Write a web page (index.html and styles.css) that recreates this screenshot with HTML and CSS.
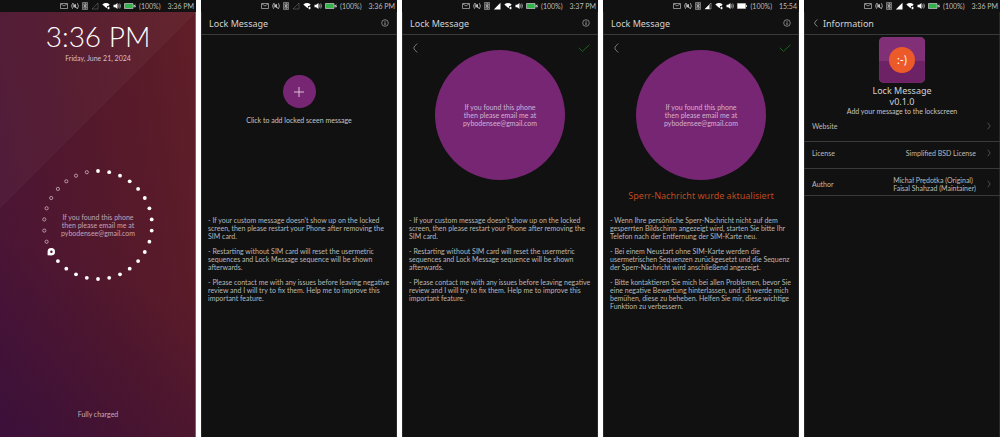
FILE: index.html
```
<!DOCTYPE html>
<html lang="en">
<head>
<meta charset="utf-8">
<title>Lock Message</title>
<link rel="stylesheet" href="styles.css">
</head>
<body>
<svg class="defs" aria-hidden="true">
  <symbol id="mail" viewBox="0 0 8 8"><path d="M.5 1.5h7v5h-7zM1 2l3 2 3-2" fill="none" stroke="currentColor" stroke-width=".7"/></symbol>
  <symbol id="vibrate" viewBox="0 0 8 8"><path d="M1.600 1.200Q-.400 4 1.600 6.800M6.400 1.200q2 2.800 0 5.600M2.600 2.500Q1.900 4 2.600 5.500M1.800 1l4.600 6" fill="none" stroke="currentColor" stroke-width=".8"/><path d="M3 3l2-1v4L3 5z" fill="currentColor"/></symbol>
  <symbol id="bluetooth" viewBox="0 0 6 8"><path d="M.500.500h5v7h-5z" fill="#444" stroke="currentColor" stroke-width=".5"/><path d="M1.500 2.600l3 2.700L3 6.600V1.400l1.500 1.300-3 2.700" fill="none" stroke="currentColor" stroke-width=".7"/></symbol>
  <symbol id="signal-off" viewBox="0 0 8 8"><path d="M7 1v6H1z" fill="none" stroke="currentColor" stroke-width=".5" opacity=".6"/></symbol>
  <symbol id="signal" viewBox="0 0 8 8"><path d="M7.500.800v6.700H.800z" fill="#fff"/></symbol>
  <symbol id="signal-mid" viewBox="0 0 8 8"><path d="M7 1v6H1z" fill="none" stroke="currentColor" stroke-width=".6"/><path d="M5.500 2.500V7H1z" fill="#fff"/></symbol>
  <symbol id="wifi" viewBox="0 0 8 8"><path d="M.300 2.500Q4-.300 7.700 2.500L6.300 4H5v1.500L4.300 6z" fill="#fff"/><path d="M5.600 4.800h1.800v2.400H5.600z" fill="#fff"/></symbol>
  <symbol id="sound" viewBox="0 0 8 8"><path d="M.500 2.700h1.700L4.500 1v6L2.200 5.300H.500z" fill="#fff"/><path d="M5.500 2.500q.900 1.500 0 3M6.700 1.500q1.500 2.500 0 5" fill="none" stroke="currentColor" stroke-width=".8"/></symbol>
  <symbol id="charging" viewBox="0 0 12 8"><path d="M.500 1.500h8.500v5H.500z" fill="#32b44a" stroke="#bbb" stroke-width=".8"/><path d="M9.500 3h1v2h-1z" fill="#ccc"/><path d="M11.500 1.500L10 4.300h1L10.600 6.500 12 3.700h-1z" fill="#fff"/></symbol>
  <symbol id="battery" viewBox="0 0 10 8"><path d="M.500 1.500h8v5h-8z" fill="#fff" stroke="#bbb" stroke-width=".8"/><path d="M9 3h1v2H9z" fill="#ccc"/></symbol>
  <symbol id="info" viewBox="0 0 8 8"><circle cx="4" cy="4" r="3.300" fill="none" stroke="currentColor" stroke-width=".6"/><path d="M4 1.900v.8M4 3.400v2.700" stroke="currentColor" stroke-width=".8"/></symbol>
  <symbol id="back" viewBox="0 0 5 10"><path d="M4.200.500L1 4v2l3.200 3.500" fill="none" stroke="currentColor" stroke-width=".8"/></symbol>
  <symbol id="next" viewBox="0 0 4 8"><path d="M.700.700L3.200 4 .700 7.300" fill="none" stroke="currentColor" stroke-width=".6"/></symbol>
  <symbol id="check" viewBox="0 0 12 8"><path d="M.700 3.800l3.800 3.500L11.500.700" fill="none" stroke="currentColor" stroke-width=".9"/></symbol>
</svg>

<main class="screens">
  <section class="screen lock">
    <div class="status">
      <svg class="ic"><use href="#mail"/></svg><svg class="ic"><use href="#vibrate"/></svg><svg class="ic slim"><use href="#bluetooth"/></svg><svg class="ic"><use href="#signal-off"/></svg><svg class="ic"><use href="#wifi"/></svg><svg class="ic"><use href="#sound"/></svg><svg class="ic wide"><use href="#charging"/></svg>
      <span>(100%)</span><time class="clock">3:36 PM</time>
    </div>
    <time class="lock-time">3:36 PM</time>
    <p class="lock-date">Friday, June 21, 2024</p>
    <div class="ring">
      <svg class="dots" viewBox="0 0 120 120" aria-hidden="true">
        <g fill="#fff">
          <circle cx="60" cy="6" r="1.900"/><circle cx="71.200" cy="7.200" r="1.900"/><circle cx="82" cy="10.700" r="1.900"/><circle cx="91.700" cy="16.300" r="1.900"/><circle cx="100.100" cy="23.900" r="1.900"/>
          <circle cx="106.800" cy="33" r="1.900"/><circle cx="111.400" cy="43.300" r="1.900"/><circle cx="113.700" cy="54.400" r="1.900"/><circle cx="113.700" cy="65.600" r="1.900"/><circle cx="111.400" cy="76.700" r="1.900"/>
          <circle cx="106.800" cy="87" r="1.900"/><circle cx="100.100" cy="96.100" r="1.900"/><circle cx="91.700" cy="103.700" r="1.900"/><circle cx="82" cy="109.300" r="1.900"/><circle cx="71.200" cy="112.800" r="1.900"/>
          <circle cx="60" cy="114" r="1.900"/><circle cx="48.800" cy="112.800" r="1.900"/><circle cx="38" cy="109.300" r="1.900"/><circle cx="28.300" cy="103.700" r="1.900"/><circle cx="19.900" cy="96.100" r="1.900"/>
          <path d="M9.600 90.300V86.800A3.700 3.700 0 1 1 13.300 90.400z"/>
        </g>
        <circle cx="13.400" cy="86.800" r="1.200" fill="#4d1631"/>
        <g fill="none" stroke="#cdb3bd" stroke-width=".8">
          <circle cx="8.600" cy="76.700" r="1.600"/><circle cx="6.300" cy="65.600" r="1.600"/><circle cx="6.300" cy="54.400" r="1.600"/><circle cx="8.600" cy="43.300" r="1.600"/><circle cx="13.200" cy="33" r="1.600"/>
          <circle cx="19.900" cy="23.900" r="1.600"/><circle cx="28.300" cy="16.300" r="1.600"/><circle cx="38" cy="10.700" r="1.600"/><circle cx="48.800" cy="7.200" r="1.600"/>
        </g>
      </svg>
      <p class="ring-text">If you found this phone<br>then please email me at<br>pybodensee@gmail.com</p>
    </div>
    <p class="charge">Fully charged</p>
  </section>

  <section class="screen">
    <div class="status">
      <svg class="ic"><use href="#mail"/></svg><svg class="ic"><use href="#vibrate"/></svg><svg class="ic slim"><use href="#bluetooth"/></svg><svg class="ic"><use href="#signal-off"/></svg><svg class="ic"><use href="#wifi"/></svg><svg class="ic"><use href="#sound"/></svg><svg class="ic wide"><use href="#charging"/></svg>
      <span>(100%)</span><time class="clock">3:36 PM</time>
    </div>
    <header class="bar"><h1 class="title">Lock Message</h1><button class="icon-btn" aria-label="Information"><svg class="ic"><use href="#info"/></svg></button></header>
    <div class="stage add">
      <button class="add-btn" aria-labelledby="add-label"><svg class="plus" viewBox="0 0 10 10"><path d="M5 0v10M0 5h10" stroke="#e3cfe2" stroke-width=".9"/></svg></button>
      <p id="add-label">Click to add locked sceen message</p>
    </div>
    <div class="notes">
      <p>- If your custom message doesn't show up on the locked<br>screen, then please restart your Phone after removing the<br>SIM card.</p>
      <p>- Restarting without SIM card will reset the usermetric<br>sequences and Lock Message sequence will be shown<br>afterwards.</p>
      <p>- Please contact me with any issues before leaving negative<br>review and I will try to fix them. Help me to improve this<br>important feature.</p>
    </div>
  </section>

  <section class="screen">
    <div class="status">
      <svg class="ic"><use href="#mail"/></svg><svg class="ic"><use href="#vibrate"/></svg><svg class="ic slim"><use href="#bluetooth"/></svg><svg class="ic"><use href="#signal"/></svg><svg class="ic"><use href="#wifi"/></svg><svg class="ic"><use href="#sound"/></svg><svg class="ic wide"><use href="#charging"/></svg>
      <span>(100%)</span><time class="clock">3:37 PM</time>
    </div>
    <header class="bar"><h1 class="title">Lock Message</h1><button class="icon-btn" aria-label="Information"><svg class="ic"><use href="#info"/></svg></button></header>
    <div class="stage edit">
      <button class="icon-btn tool" aria-label="Back"><svg class="chev"><use href="#back"/></svg></button>
      <div class="disc"><textarea class="message" rows="3" aria-label="Lock message">If you found this phone
then please email me at
pybodensee@gmail.com</textarea></div>
      <button class="icon-btn tool save" aria-label="Save"><svg class="ic wide"><use href="#check"/></svg></button>
    </div>
    <div class="notes">
      <p>- If your custom message doesn't show up on the locked<br>screen, then please restart your Phone after removing the<br>SIM card.</p>
      <p>- Restarting without SIM card will reset the usermetric<br>sequences and Lock Message sequence will be shown<br>afterwards.</p>
      <p>- Please contact me with any issues before leaving negative<br>review and I will try to fix them. Help me to improve this<br>important feature.</p>
    </div>
  </section>

  <section class="screen" lang="de">
    <div class="status">
      <svg class="ic"><use href="#mail"/></svg><svg class="ic"><use href="#vibrate"/></svg><svg class="ic slim"><use href="#bluetooth"/></svg><svg class="ic"><use href="#signal-mid"/></svg><svg class="ic"><use href="#wifi"/></svg><svg class="ic"><use href="#sound"/></svg><svg class="ic cell"><use href="#battery"/></svg>
      <span>(100%)</span><time class="clock">15:54</time>
    </div>
    <header class="bar"><h1 class="title">Lock Message</h1><button class="icon-btn" aria-label="Information"><svg class="ic"><use href="#info"/></svg></button></header>
    <div class="stage edit">
      <button class="icon-btn tool" aria-label="Zurück"><svg class="chev"><use href="#back"/></svg></button>
      <div class="disc"><textarea class="message" rows="3" aria-label="Sperr-Nachricht">If you found this phone
then please email me at
pybodensee@gmail.com</textarea></div>
      <button class="icon-btn tool save" aria-label="Speichern"><svg class="ic wide"><use href="#check"/></svg></button>
      <p class="updated" role="status">Sperr-Nachricht wurde aktualisiert</p>
    </div>
    <div class="notes">
      <p>- Wenn Ihre persönliche Sperr-Nachricht nicht auf dem<br>gesperrten Bildschirm angezeigt wird, starten Sie bitte Ihr<br>Telefon nach der Entfernung der SIM-Karte neu.</p>
      <p>- Bei einem Neustart ohne SIM-Karte werden die<br>usermetrischen Sequenzen zurückgesetzt und die Sequenz<br>der Sperr-Nachricht wird anschließend angezeigt.</p>
      <p>- Bitte kontaktieren Sie mich bei allen Problemen, bevor Sie<br>eine negative Bewertung hinterlassen, und ich werde mich<br>bemühen, diese zu beheben. Helfen Sie mir, diese wichtige<br>Funktion zu verbessern.</p>
    </div>
  </section>

  <section class="screen">
    <div class="status">
      <svg class="ic"><use href="#mail"/></svg><svg class="ic"><use href="#vibrate"/></svg><svg class="ic slim"><use href="#bluetooth"/></svg><svg class="ic"><use href="#signal"/></svg><svg class="ic"><use href="#wifi"/></svg><svg class="ic"><use href="#sound"/></svg><svg class="ic wide"><use href="#charging"/></svg>
      <span>(100%)</span><time class="clock">3:36 PM</time>
    </div>
    <header class="bar info-bar"><button class="icon-btn" aria-label="Back"><svg class="arrow"><use href="#back"/></svg></button><h1 class="title">Information</h1></header>
    <div class="about">
      <div class="logo"><span class="face">:-)</span></div>
      <h2 class="app">Lock Message<br>v0.1.0</h2>
      <p>Add your message to the lockscreen</p>
    </div>
    <a class="row" href="#website"><span class="key">Website</span><svg class="arrow"><use href="#next"/></svg></a>
    <a class="row" href="#license"><span class="key">License</span><span>Simplified BSD License</span><svg class="arrow"><use href="#next"/></svg></a>
    <a class="row author" href="#author"><span class="key">Author</span><span>Michał Prędotka (Original)<br>Faisal Shahzad (Maintainer)</span><svg class="arrow"><use href="#next"/></svg></a>
  </section>
</main>
</body>
</html>
```
FILE: styles.css
```
* { box-sizing: border-box; }

body {
  margin: 0;
  background: #fff;
  color: #c4c4c4;
  font: 7px/8px Lato, "Noto Sans", sans-serif;
}

p, h1, h2 { margin: 0; font-weight: 400; }

button {
  padding: 0;
  border: 0;
  background: none;
  color: inherit;
  font: inherit;
  cursor: pointer;
}

svg { display: block; }
.defs { position: absolute; width: 0; height: 0; }

.screens {
  display: grid;
  grid-template-columns: repeat(5, 1fr);
  gap: 5px;
  min-height: 100vh;
}

.screen {
  display: flex;
  flex-direction: column;
  min-width: 0;
  background: #111;
  box-shadow: inset 1px 0 #292929, inset -1px 0 #292929;
}

.status {
  display: flex;
  align-items: center;
  justify-content: flex-end;
  gap: 3px;
  height: 12px;
  padding-right: 2px;
  background: #111;
  color: #bcbcbc;
}
.clock { padding-left: 4px; }

.ic { width: 8px; height: 8px; }
.slim { width: 6px; }
.wide { width: 12px; }
.cell { width: 10px; }
.chev { width: 5px; height: 10px; }
.arrow { width: 4px; height: 8px; }

/* Lock screen */
.lock {
  align-items: center;
  background:
    linear-gradient(135deg, rgba(255, 255, 255, .03) 33%, transparent 33%),
    linear-gradient(200deg, transparent 60%, rgba(35, 8, 62, .35)),
    linear-gradient(80deg, #481438, #53182c 50%, #601e27);
  box-shadow: inset -1px 0 #905a66;
  text-align: center;
}
.lock .status { align-self: stretch; }
.lock-time {
  padding-top: 8px;
  color: #fff;
  font-size: 28px;
  font-weight: 300;
  line-height: 32px;
}
.lock-date { padding-top: 2px; color: #d5bfc6; }
.ring { display: grid; place-items: center; margin-top: 103px; color: #c4a5b1; }
.dots, .ring-text { grid-area: 1 / 1; }
.dots { width: 120px; height: 120px; }
.charge { margin-top: auto; padding-bottom: 19px; color: #c3acba; }

/* App header */
.bar {
  display: flex;
  align-items: center;
  justify-content: space-between;
  height: 23px;
  padding: 0 8px;
  border-bottom: 1px solid #3a3a3a;
}
.title, .app, .updated {
  color: #d2d2d2;
  font-family: "Noto Sans", sans-serif;
  font-size: 9px;
  line-height: 11px;
}
.info-bar { justify-content: flex-start; gap: 5px; padding-left: 10px; }

/* Editor area */
.stage { height: 181px; }
.add {
  display: flex;
  flex-direction: column;
  align-items: center;
  gap: 8px;
  padding-top: 40px;
}
.add-btn {
  display: grid;
  place-items: center;
  width: 33px;
  height: 33px;
  border-radius: 50%;
  background: #772673;
}
.plus { width: 10px; height: 10px; }

.edit {
  display: grid;
  grid-template-columns: 1fr 130px 1fr;
  grid-template-rows: 147px auto;
  align-items: start;
  padding: 8px 8px 0;
}
.tool { justify-self: start; padding-left: 3px; color: #909090; }
.save { justify-self: end; padding: 1px 0 0; color: #14701c; }
.disc {
  display: grid;
  place-items: center;
  height: 130px;
  margin-top: 7px;
  border-radius: 50%;
  background: #772673;
}
.message {
  width: 110px;
  padding: 0;
  border: 0;
  background: none;
  color: #d3b3d2;
  font: inherit;
  text-align: center;
  resize: none;
  overflow: hidden;
}
.updated {
  grid-column: 1 / -1;
  color: #bd4a1e;
  text-align: center;
}

.notes {
  display: grid;
  gap: 7px;
  padding: 0 7px;
  color: #b8b8b8;
  white-space: nowrap;
}

/* About page */
.about {
  display: flex;
  flex-direction: column;
  align-items: center;
  padding-top: 2px;
}
.logo {
  display: grid;
  place-items: center;
  width: 46px;
  height: 46px;
  border-radius: 5px;
  background: linear-gradient(#812f77 52%, #6c2264 52%);
  box-shadow: inset 0 0 1px #9c5c96;
}
.face {
  width: 26px;
  height: 26px;
  border-radius: 50%;
  background: #ec5a29;
  color: #fff;
  font-size: 11px;
  line-height: 26px;
  text-align: center;
}
.app { padding-top: 2px; text-align: center; }

.row {
  display: flex;
  align-items: center;
  gap: 11px;
  height: 27px;
  padding: 0 9px 4px 8px;
  border-bottom: 1px solid #3a3a3a;
  color: #bcbcbc;
  text-decoration: none;
}
.row .arrow { color: #777; }
.key { flex: 1; }
.author { padding-top: 4px; padding-bottom: 0; }
```
